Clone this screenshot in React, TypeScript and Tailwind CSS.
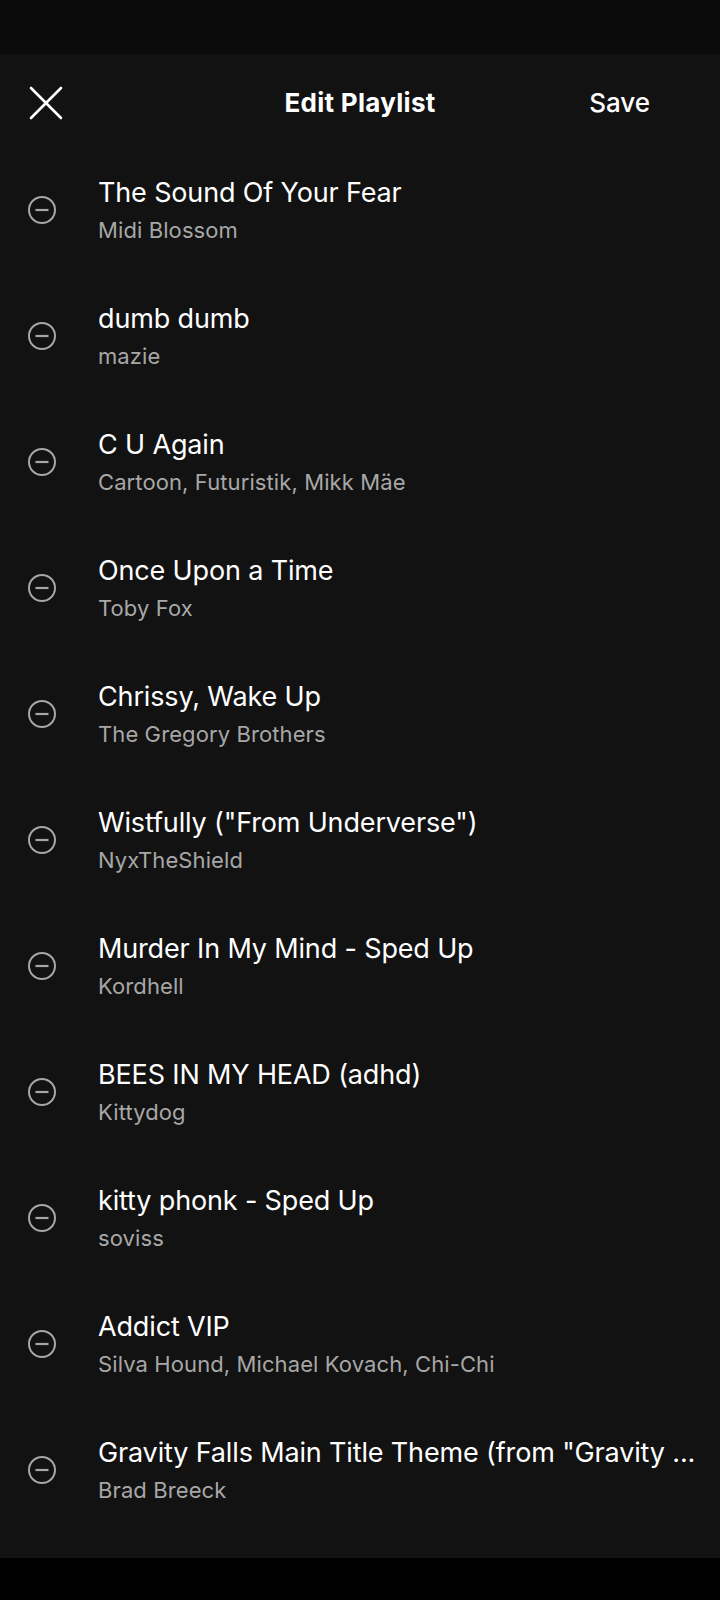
type Track = { title: string; artist: string }

const tracks: Array<Track> = [
    { title: "The Sound Of Your Fear", artist: "Midi Blossom" },
    { title: "dumb dumb", artist: "mazie" },
    { title: "C U Again", artist: "Cartoon, Futuristik, Mikk Mäe" },
    { title: "Once Upon a Time", artist: "Toby Fox" },
    { title: "Chrissy, Wake Up", artist: "The Gregory Brothers" },
    { title: "Wistfully (\"From Underverse\")", artist: "NyxTheShield" },
    { title: "Murder In My Mind - Sped Up", artist: "Kordhell" },
    { title: "BEES IN MY HEAD (adhd)", artist: "Kittydog" },
    { title: "kitty phonk - Sped Up", artist: "soviss" },
    { title: "Addict VIP", artist: "Silva Hound, Michael Kovach, Chi-Chi" },
    { title: "Gravity Falls Main Title Theme (from \"Gravity ...", artist: "Brad Breeck" },
]

// 閉じるボタン
const CloseIcon = () => (
    <svg width="34" height="34" viewBox="0 0 34 34" fill="none">
        <line x1="2" y1="2" x2="32" y2="32" stroke="white" strokeWidth="2.6" strokeLinecap="round" />
        <line x1="32" y1="2" x2="2" y2="32" stroke="white" strokeWidth="2.6" strokeLinecap="round" />
    </svg>
)

// 削除ボタン (丸にマイナス)
const RemoveIcon = () => (
    <svg width="28" height="28" viewBox="0 0 28 28" fill="none">
        <circle cx="14" cy="14" r="13" stroke="#a7a7a7" strokeWidth="2" />
        <line x1="7.5" y1="14" x2="20.5" y2="14" stroke="#a7a7a7" strokeWidth="2.2" />
    </svg>
)

export default function App() {
    return (
        <div className="flex flex-col w-[720px] h-[1600px] bg-black text-white" style={{ fontFamily: "Inter, 'Noto Sans', sans-serif" }}>
            {/* ステータスバー */}
            <div className="h-[54px] bg-[#0b0b0b]" />
            <div className="flex flex-col h-[1504px] bg-[#121212]">
                {/* ヘッダー */}
                <div className="relative flex items-center justify-between h-[93px] pt-[4px] pl-[29px] pr-[70px]">
                    <CloseIcon />
                    <div className="absolute left-0 right-0 top-[4px] bottom-0 flex items-center justify-center pointer-events-none">
                        <span className="text-[26px] font-bold tracking-[0.3px]">Edit Playlist</span>
                    </div>
                    <span className="text-[26px] font-medium">Save</span>
                </div>
                {/* 曲リスト */}
                {tracks.map((track) => (
                    <div key={track.title} className="flex items-center h-[126px] pl-[28px] pr-[16px]">
                        <div className="shrink-0"><RemoveIcon /></div>
                        <div className="flex flex-col min-w-0 ml-[42px]">
                            <div className="text-[27px] leading-[34px] tracking-[-0.15px] whitespace-nowrap -mt-[1px]">{track.title}</div>
                            <div className="text-[22px] leading-[28px] mt-[6px] tracking-[0.1px] text-[#a7a7a7] whitespace-nowrap">{track.artist}</div>
                        </div>
                    </div>
                ))}
            </div>
            <div className="flex-1 bg-black" />
        </div>
    )
}
